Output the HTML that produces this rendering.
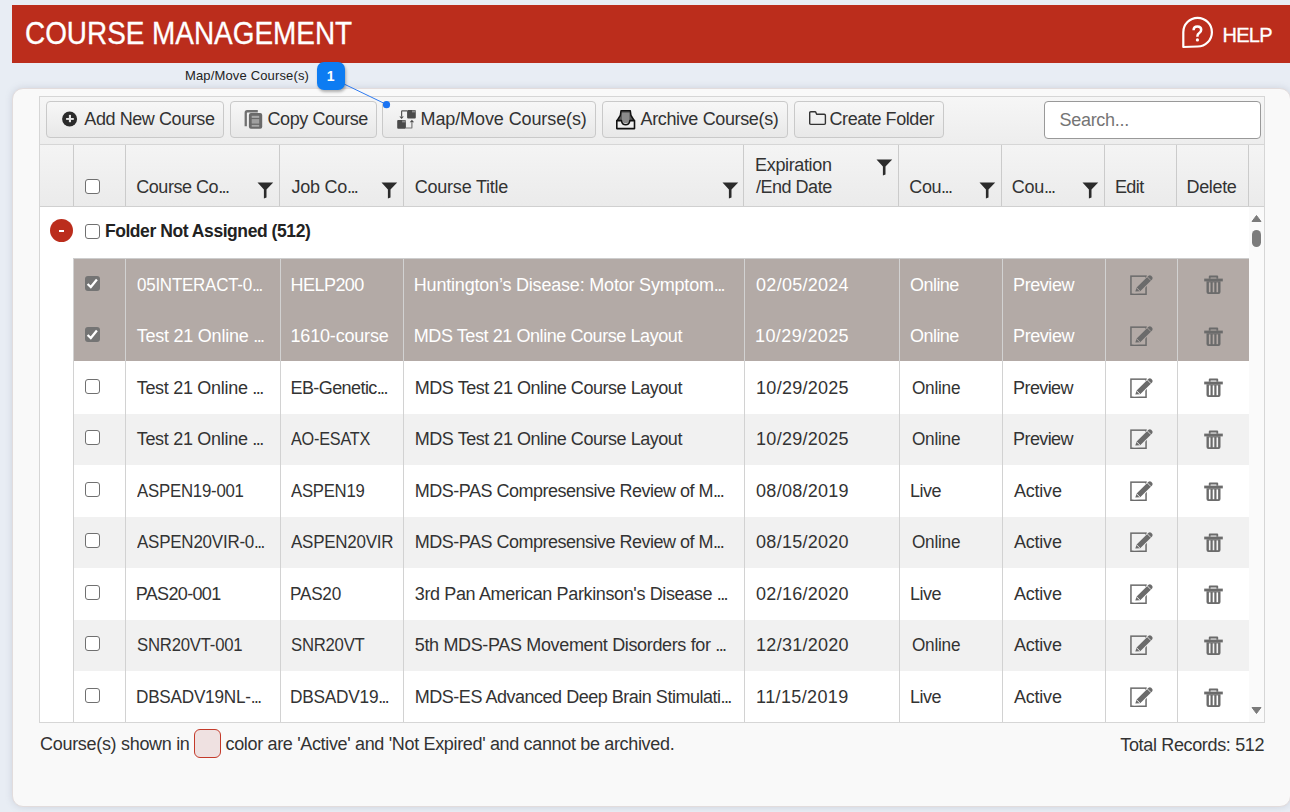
<!DOCTYPE html>
<html><head><meta charset="utf-8">
<style>
*{box-sizing:border-box;margin:0;padding:0}
html,body{width:1290px;height:812px;overflow:hidden}
body{background:#e8edf4;font-family:"Liberation Sans",sans-serif;color:#333;position:relative}
div,svg{position:absolute}
.t{white-space:nowrap;line-height:20px}
.btn{top:101px;height:37px;border:1px solid #c9c9c9;border-radius:4px;background:linear-gradient(#f7f7f7,#e8e8e8)}
.bt{top:108.5px;font-size:18px;color:#333}
.th{font-size:18px;letter-spacing:-0.25px;color:#333}
.row{left:73px;width:1176px;height:51.525px}
.c{font-size:18px;letter-spacing:-0.4px;color:#333}
.w{color:#fff}
.el{letter-spacing:-1.6px}
.sel{background:#b3aaa6}
.alt{background:#f1f1f1}
.wht{background:#fff}
.cb{width:15px;height:15px;border:1.3px solid #707070;border-radius:3px;background:#fff}
.cbc{width:15px;height:15px;border-radius:3px;background:#747474}
.vl{width:1px;background:#d2d2d2}
.ft{font-size:18px;letter-spacing:-0.3px;color:#333}
</style></head><body>
<div style="left:12px;top:5px;width:1290px;height:57.7px;background:#bb2d1c"></div>
<div class="t" style="left:24.5px;top:16px;font-size:31px;line-height:36px;letter-spacing:0px;color:#fff;-webkit-text-stroke:0.3px #fff;transform:scaleX(0.9);transform-origin:0 0">COURSE MANAGEMENT</div>
<svg style="left:1180px;top:15px" width="35" height="35" viewBox="0 0 35 35"><path d="M3.3,32 V17.2 A14.3,14.3 0 1 1 17.6,31.5 Z" fill="none" stroke="#fff" stroke-width="2.2" stroke-linejoin="round"/><path d="M13.6,15.2 Q13.6,11.5 17.4,11.5 Q21.2,11.5 21.2,14.8 Q21.2,16.8 19.3,18 Q17.4,19.2 17.4,21.2 V21.8" fill="none" stroke="#fff" stroke-width="2.5"/><circle cx="17.4" cy="24.9" r="1.6" fill="#fff"/></svg>
<div class="t" style="left:1222.5px;top:24.5px;font-size:20px;letter-spacing:-0.75px;color:#fff;-webkit-text-stroke:0.3px #fff">HELP</div>
<div style="left:12px;top:88px;width:1279px;height:719px;background:#f9f9f9;border:1px solid #e2dcdc;border-radius:11px;box-shadow:0 0 7px rgba(110,120,140,.22)"></div>
<div style="left:39px;top:96px;width:1226px;height:49px;border:1px solid #d6d6d6;border-bottom:none;background:linear-gradient(#f6f6f6,#ededed)"></div>
<div class="btn" style="left:46px;width:178px"></div>
<div class="btn" style="left:230px;width:147px"></div>
<div class="btn" style="left:382px;width:214px"></div>
<div class="btn" style="left:602px;width:186px"></div>
<div class="btn" style="left:794px;width:150px"></div>
<div class="t bt" style="left:84.3px;letter-spacing:-0.42px">Add New Course</div>
<div class="t bt" style="left:267.5px;letter-spacing:-0.42px">Copy Course</div>
<div class="t bt" style="left:420.5px;letter-spacing:-0.1px">Map/Move Course(s)</div>
<div class="t bt" style="left:640.5px;letter-spacing:-0.36px">Archive Course(s)</div>
<div class="t bt" style="left:829.5px;letter-spacing:-0.42px">Create Folder</div>
<svg style="left:60px;top:109px" width="20" height="20" viewBox="0 0 20 20"><circle cx="9.6" cy="10" r="7.5" fill="#2b2b2b"/><rect x="6.1" y="9" width="7.7" height="1.9" fill="#e6e6e6"/><rect x="8.9" y="5.9" width="2.1" height="7.3" fill="#e6e6e6"/></svg>
<svg style="left:243px;top:109px" width="21" height="21" viewBox="0 0 21 21"><path d="M1.6,17.2 V3.6 Q1.6,1.1 4.1,1.1 H14.8 V3.4 H4.4 Q3.9,3.4 3.9,3.9 V17.2 Z" fill="#707070"/><rect x="5.9" y="4" width="13.3" height="15.8" rx="2" fill="#6a6a6a"/><rect x="8.7" y="6.8" width="7.5" height="2.1" fill="#a8a8a8"/><rect x="8.7" y="10.1" width="7.5" height="4.5" fill="#a0a0a0"/><rect x="8.7" y="15.9" width="7.5" height="1.8" fill="#a8a8a8"/></svg>
<svg style="left:396px;top:109px" width="21" height="21" viewBox="0 0 21 21"><rect x="11.1" y="1.1" width="8.7" height="8.5" rx="1" fill="#4a4a4a"/><rect x="16" y="1.5" width="3.5" height="1.9" fill="#8c8c8c"/><path d="M11.1,1.9 H6.2 Q5.6,1.9 5.6,2.5 V7.6" fill="none" stroke="#555" stroke-width="1.2"/><path d="M3.4,7.5 H7.8 L5.6,10 Z" fill="#4a4a4a"/><rect x="1.2" y="11.1" width="8.7" height="8.7" rx="1" fill="#4a4a4a"/><rect x="6.1" y="11.5" width="3.5" height="1.9" fill="#8c8c8c"/><path d="M9.9,19 H15.3 Q15.9,19 15.9,18.4 V13.2" fill="none" stroke="#777" stroke-width="1.2"/><path d="M13.7,13.3 H18.1 L15.9,10.8 Z" fill="#4a4a4a"/></svg>
<svg style="left:614px;top:109px" width="23" height="21" viewBox="0 0 23 21"><path d="M2.9,11.9 L6.3,6.5 L7,1.8 H16.3 L17,6.5 L20.4,11.9" fill="#5a5a5a" stroke="#111" stroke-width="1.5" stroke-linejoin="round"/><path d="M7.9,3.8 H15.4 V10.5 Q15.4,14.3 11.65,14.3 Q7.9,14.3 7.9,10.5 Z" fill="#8a8a8a"/><path d="M2.8,11.6 H7.4 Q8.2,15.8 11.65,15.8 Q15.1,15.8 15.9,11.6 H20.5 V19.6 H2.8 Z" fill="#eeeeee" stroke="#111" stroke-width="1.6" stroke-linejoin="round"/></svg>
<svg style="left:808px;top:110px" width="19" height="16" viewBox="0 0 19 16"><path d="M1.7,13.3 V2.8 Q1.7,1.7 2.8,1.7 H7 Q7.6,1.7 7.9,2.4 L8.6,4.3 H16.3 Q17.4,4.3 17.4,5.4 V13.3 Q17.4,14.4 16.3,14.4 H2.8 Q1.7,14.4 1.7,13.3 Z" fill="none" stroke="#333" stroke-width="1.4" stroke-linejoin="round"/></svg>
<div style="left:1044px;top:101px;width:217px;height:38px;border:1.5px solid #999;border-radius:4px;background:#fff"></div>
<div class="t" style="left:1059.5px;top:110px;font-size:18px;letter-spacing:-0.3px;color:#757575">Search...</div>
<div style="left:39px;top:144px;width:1226px;height:579px;border:1px solid #d6d6d6;background:#fff"></div>
<div style="left:40px;top:145px;width:1224px;height:62px;background:linear-gradient(#f4f4f4,#ebebeb);border-bottom:1px solid #d0d0d0"></div>
<div class="vl" style="left:73px;top:145px;height:61px;background:#cbcbcb"></div>
<div class="vl" style="left:125px;top:145px;height:61px;background:#cbcbcb"></div>
<div class="vl" style="left:279px;top:145px;height:61px;background:#cbcbcb"></div>
<div class="vl" style="left:403px;top:145px;height:61px;background:#cbcbcb"></div>
<div class="vl" style="left:743px;top:145px;height:61px;background:#cbcbcb"></div>
<div class="vl" style="left:898px;top:145px;height:61px;background:#cbcbcb"></div>
<div class="vl" style="left:1001px;top:145px;height:61px;background:#cbcbcb"></div>
<div class="vl" style="left:1104px;top:145px;height:61px;background:#cbcbcb"></div>
<div class="vl" style="left:1176px;top:145px;height:61px;background:#cbcbcb"></div>
<div class="vl" style="left:1248px;top:145px;height:61px;background:#cbcbcb"></div>
<div class="cb" style="left:85px;top:179px"></div>
<div class="t th" style="left:136.30px;top:177px;letter-spacing:-0.468px">Course Co<span class="el">...</span></div>
<svg style="left:257.3px;top:181.6px" width="17" height="17" viewBox="0 0 17 17"><path d="M0.5,0.5 H16.2 L9.5,7.4 V15.6 L6.9,16.6 V7.4 Z" fill="#2b2b2b"/></svg>
<div class="t th" style="left:291.50px;top:177px;letter-spacing:-0.250px">Job Co<span class="el">...</span></div>
<svg style="left:381.1px;top:181.6px" width="17" height="17" viewBox="0 0 17 17"><path d="M0.5,0.5 H16.2 L9.5,7.4 V15.6 L6.9,16.6 V7.4 Z" fill="#2b2b2b"/></svg>
<div class="t th" style="left:414.70px;top:177px;letter-spacing:-0.214px">Course Title</div>
<svg style="left:722.1px;top:181.6px" width="17" height="17" viewBox="0 0 17 17"><path d="M0.5,0.5 H16.2 L9.5,7.4 V15.6 L6.9,16.6 V7.4 Z" fill="#2b2b2b"/></svg>
<div class="t th" style="left:909.30px;top:177px;letter-spacing:-0.410px">Cou<span class="el">...</span></div>
<svg style="left:978.9px;top:181.6px" width="17" height="17" viewBox="0 0 17 17"><path d="M0.5,0.5 H16.2 L9.5,7.4 V15.6 L6.9,16.6 V7.4 Z" fill="#2b2b2b"/></svg>
<div class="t th" style="left:1011.70px;top:177px;letter-spacing:-0.210px">Cou<span class="el">...</span></div>
<svg style="left:1082px;top:181.6px" width="17" height="17" viewBox="0 0 17 17"><path d="M0.5,0.5 H16.2 L9.5,7.4 V15.6 L6.9,16.6 V7.4 Z" fill="#2b2b2b"/></svg>
<div class="t th" style="left:1114.90px;top:177px;letter-spacing:-0.583px">Edit</div>
<div class="t th" style="left:1186.50px;top:177px;letter-spacing:-0.330px">Delete</div>
<div class="t th" style="left:755.10px;top:155px;letter-spacing:-0.361px">Expiration</div>
<div class="t th" style="left:756.10px;top:177px;letter-spacing:-0.500px">/End Date</div>
<svg style="left:876px;top:158.8px" width="17" height="17" viewBox="0 0 17 17"><path d="M0.5,0.5 H16.2 L9.5,7.4 V15.6 L6.9,16.6 V7.4 Z" fill="#2b2b2b"/></svg>
<div style="left:49.75px;top:218.8px;width:23px;height:23px;border-radius:50%;background:#bb2d1c"></div>
<div style="left:58.5px;top:229.5px;width:5.5px;height:2.6px;background:#fff"></div>
<div class="cb" style="left:85px;top:224px"></div>
<div class="t" style="left:104.90px;top:220.5px;font-size:17.5px;font-weight:bold;letter-spacing:-0.430px;color:#222">Folder Not Assigned (512)</div>
<div style="left:1249px;top:207px;width:15px;height:515px;background:#fafafa"></div>
<svg style="left:1251.2px;top:214px" width="11" height="9" viewBox="0 0 11 9"><path d="M5.5,1.5 L10,7.5 H1 Z" fill="#7a7a7a" stroke="#7a7a7a" stroke-width="1" stroke-linejoin="round"/></svg>
<div style="left:1252px;top:230px;width:9px;height:16.6px;border-radius:4.5px;background:#7c7c7c"></div>
<svg style="left:1251px;top:706px" width="11" height="9" viewBox="0 0 11 9"><path d="M5.5,7.5 L10,1.5 H1 Z" fill="#7a7a7a" stroke="#7a7a7a" stroke-width="1" stroke-linejoin="round"/></svg>
<div class="row sel" style="top:259px;height:102.45px"></div>
<div style="left:73px;top:258px;width:1176px;height:1px;background:#cdcdcd"></div>
<div class="row wht" style="top:361.65px"></div>
<div class="row alt" style="top:413.78px;height:50.925px"></div>
<div class="row wht" style="top:464.70px"></div>
<div class="row alt" style="top:516.83px;height:50.925px"></div>
<div class="row wht" style="top:567.75px"></div>
<div class="row alt" style="top:619.88px;height:50.925px"></div>
<div class="row wht" style="top:670.80px"></div>
<div class="cbc" style="left:85px;top:275.80px"><svg style="left:0;top:0" width="15" height="15" viewBox="0 0 15 15"><path d="M2.6,8 L5.8,11 L11.9,3.6" fill="none" stroke="#fff" stroke-width="2.3"/></svg></div>
<div class="t c w" style="left:136.70px;top:274.70px;letter-spacing:-0.250px;transform:scaleX(0.9421);transform-origin:0 0">05INTERACT-0<span class="el">...</span></div>
<div class="t c w" style="left:290.50px;top:274.70px;letter-spacing:-0.533px">HELP200</div>
<div class="t c w" style="left:413.80px;top:274.70px;letter-spacing:-0.195px">Huntington’s Disease: Motor Symptom<span class="el">...</span></div>
<div class="t c w" style="left:756.10px;top:274.70px;letter-spacing:0.267px">02/05/2024</div>
<div class="t c w" style="left:910.10px;top:274.70px;letter-spacing:-0.560px">Online</div>
<div class="t c w" style="left:1013.10px;top:274.70px;letter-spacing:-0.433px">Preview</div>
<svg style="left:1129px;top:273.80px" width="26" height="22" viewBox="0 0 26 22"><rect x="1.95" y="2.15" width="15.1" height="18.1" fill="none" stroke="#6b6b6b" stroke-width="1.5"/><path d="M4.4,19.6 L6.2,14 L19.2,1 Q20.9,-0.4 22.6,1.2 L23.9,2.5 Q25.4,4.2 23.8,5.9 L10.8,18.9 Z" fill="#b3aaa6"/><path d="M6.3,17.5 L7.6,13.6 L19.5,1.7 Q20.9,0.6 22.2,1.8 L23.1,2.8 Q24.3,4.1 23.1,5.4 L11.2,17.3 Z" fill="#6b6b6b"/><path d="M7.4,13.6 L11.2,17.4" stroke="#b3aaa6" stroke-width="0.9"/><path d="M18.3,2.9 L22,6.6" stroke="#b3aaa6" stroke-width="0.8"/></svg>
<svg style="left:1203px;top:275.40px" width="21" height="21" viewBox="0 0 21 21"><rect x="1.2" y="3.6" width="18.6" height="2.8" fill="#6b6b6b"/><path d="M5.8,3.8 V1.6 Q5.8,0.6 6.8,0.6 H14.2 Q15.2,0.6 15.2,1.6 V3.8 H13.4 V2.4 H7.6 V3.8 Z" fill="#6b6b6b"/><path d="M3.5,6.2 H17.5 V17 Q17.5,19 15.5,19 H5.5 Q3.5,19 3.5,17 Z" fill="#6b6b6b"/><rect x="5.9" y="7.4" width="1.6" height="9.8" fill="#b3aaa6"/><rect x="9.7" y="7.4" width="1.6" height="9.8" fill="#b3aaa6"/><rect x="13.5" y="7.4" width="1.6" height="9.8" fill="#b3aaa6"/></svg>
<div class="cbc" style="left:85px;top:327.32px"><svg style="left:0;top:0" width="15" height="15" viewBox="0 0 15 15"><path d="M2.6,8 L5.8,11 L11.9,3.6" fill="none" stroke="#fff" stroke-width="2.3"/></svg></div>
<div class="t c w" style="left:136.70px;top:326.23px;letter-spacing:-0.235px">Test 21 Online <span class="el">...</span></div>
<div class="t c w" style="left:290.50px;top:326.23px;letter-spacing:-0.180px">1610-course</div>
<div class="t c w" style="left:413.80px;top:326.23px;letter-spacing:-0.426px">MDS Test 21 Online Course Layout</div>
<div class="t c w" style="left:755.10px;top:326.23px;letter-spacing:0.378px">10/29/2025</div>
<div class="t c w" style="left:910.10px;top:326.23px;letter-spacing:-0.560px">Online</div>
<div class="t c w" style="left:1013.10px;top:326.23px;letter-spacing:-0.433px">Preview</div>
<svg style="left:1129px;top:325.32px" width="26" height="22" viewBox="0 0 26 22"><rect x="1.95" y="2.15" width="15.1" height="18.1" fill="none" stroke="#6b6b6b" stroke-width="1.5"/><path d="M4.4,19.6 L6.2,14 L19.2,1 Q20.9,-0.4 22.6,1.2 L23.9,2.5 Q25.4,4.2 23.8,5.9 L10.8,18.9 Z" fill="#b3aaa6"/><path d="M6.3,17.5 L7.6,13.6 L19.5,1.7 Q20.9,0.6 22.2,1.8 L23.1,2.8 Q24.3,4.1 23.1,5.4 L11.2,17.3 Z" fill="#6b6b6b"/><path d="M7.4,13.6 L11.2,17.4" stroke="#b3aaa6" stroke-width="0.9"/><path d="M18.3,2.9 L22,6.6" stroke="#b3aaa6" stroke-width="0.8"/></svg>
<svg style="left:1203px;top:326.93px" width="21" height="21" viewBox="0 0 21 21"><rect x="1.2" y="3.6" width="18.6" height="2.8" fill="#6b6b6b"/><path d="M5.8,3.8 V1.6 Q5.8,0.6 6.8,0.6 H14.2 Q15.2,0.6 15.2,1.6 V3.8 H13.4 V2.4 H7.6 V3.8 Z" fill="#6b6b6b"/><path d="M3.5,6.2 H17.5 V17 Q17.5,19 15.5,19 H5.5 Q3.5,19 3.5,17 Z" fill="#6b6b6b"/><rect x="5.9" y="7.4" width="1.6" height="9.8" fill="#b3aaa6"/><rect x="9.7" y="7.4" width="1.6" height="9.8" fill="#b3aaa6"/><rect x="13.5" y="7.4" width="1.6" height="9.8" fill="#b3aaa6"/></svg>
<div class="cb" style="left:85px;top:378.55px"></div>
<div class="t c" style="left:136.70px;top:377.75px;letter-spacing:-0.294px">Test 21 Online <span class="el">...</span></div>
<div class="t c" style="left:290.50px;top:377.75px;letter-spacing:-0.583px">EB-Genetic<span class="el">...</span></div>
<div class="t c" style="left:414.80px;top:377.75px;letter-spacing:-0.458px">MDS Test 21 Online Course Layout</div>
<div class="t c" style="left:756.10px;top:377.75px;letter-spacing:0.267px">10/29/2025</div>
<div class="t c" style="left:911.50px;top:377.75px;letter-spacing:-0.250px;transform:scaleX(0.9539);transform-origin:0 0">Online</div>
<div class="t c" style="left:1013.10px;top:377.75px;letter-spacing:-0.600px">Preview</div>
<svg style="left:1129px;top:376.85px" width="26" height="22" viewBox="0 0 26 22"><rect x="1.95" y="2.15" width="15.1" height="18.1" fill="none" stroke="#6b6b6b" stroke-width="1.5"/><path d="M4.4,19.6 L6.2,14 L19.2,1 Q20.9,-0.4 22.6,1.2 L23.9,2.5 Q25.4,4.2 23.8,5.9 L10.8,18.9 Z" fill="#ffffff"/><path d="M6.3,17.5 L7.6,13.6 L19.5,1.7 Q20.9,0.6 22.2,1.8 L23.1,2.8 Q24.3,4.1 23.1,5.4 L11.2,17.3 Z" fill="#6b6b6b"/><path d="M7.4,13.6 L11.2,17.4" stroke="#ffffff" stroke-width="0.9"/><path d="M18.3,2.9 L22,6.6" stroke="#ffffff" stroke-width="0.8"/></svg>
<svg style="left:1203px;top:378.45px" width="21" height="21" viewBox="0 0 21 21"><rect x="1.2" y="3.6" width="18.6" height="2.8" fill="#6b6b6b"/><path d="M5.8,3.8 V1.6 Q5.8,0.6 6.8,0.6 H14.2 Q15.2,0.6 15.2,1.6 V3.8 H13.4 V2.4 H7.6 V3.8 Z" fill="#6b6b6b"/><path d="M3.5,6.2 H17.5 V17 Q17.5,19 15.5,19 H5.5 Q3.5,19 3.5,17 Z" fill="#6b6b6b"/><rect x="5.9" y="7.4" width="1.6" height="9.8" fill="#ffffff"/><rect x="9.7" y="7.4" width="1.6" height="9.8" fill="#ffffff"/><rect x="13.5" y="7.4" width="1.6" height="9.8" fill="#ffffff"/></svg>
<div class="cb" style="left:85px;top:430.07px"></div>
<div class="t c" style="left:136.70px;top:429.28px;letter-spacing:-0.294px">Test 21 Online <span class="el">...</span></div>
<div class="t c" style="left:291.30px;top:429.28px;letter-spacing:-0.250px;transform:scaleX(0.9028);transform-origin:0 0">AO-ESATX</div>
<div class="t c" style="left:414.80px;top:429.28px;letter-spacing:-0.458px">MDS Test 21 Online Course Layout</div>
<div class="t c" style="left:756.10px;top:429.28px;letter-spacing:0.267px">10/29/2025</div>
<div class="t c" style="left:911.50px;top:429.28px;letter-spacing:-0.250px;transform:scaleX(0.9539);transform-origin:0 0">Online</div>
<div class="t c" style="left:1013.10px;top:429.28px;letter-spacing:-0.600px">Preview</div>
<svg style="left:1129px;top:428.38px" width="26" height="22" viewBox="0 0 26 22"><rect x="1.95" y="2.15" width="15.1" height="18.1" fill="none" stroke="#6b6b6b" stroke-width="1.5"/><path d="M4.4,19.6 L6.2,14 L19.2,1 Q20.9,-0.4 22.6,1.2 L23.9,2.5 Q25.4,4.2 23.8,5.9 L10.8,18.9 Z" fill="#f1f1f1"/><path d="M6.3,17.5 L7.6,13.6 L19.5,1.7 Q20.9,0.6 22.2,1.8 L23.1,2.8 Q24.3,4.1 23.1,5.4 L11.2,17.3 Z" fill="#6b6b6b"/><path d="M7.4,13.6 L11.2,17.4" stroke="#f1f1f1" stroke-width="0.9"/><path d="M18.3,2.9 L22,6.6" stroke="#f1f1f1" stroke-width="0.8"/></svg>
<svg style="left:1203px;top:429.98px" width="21" height="21" viewBox="0 0 21 21"><rect x="1.2" y="3.6" width="18.6" height="2.8" fill="#6b6b6b"/><path d="M5.8,3.8 V1.6 Q5.8,0.6 6.8,0.6 H14.2 Q15.2,0.6 15.2,1.6 V3.8 H13.4 V2.4 H7.6 V3.8 Z" fill="#6b6b6b"/><path d="M3.5,6.2 H17.5 V17 Q17.5,19 15.5,19 H5.5 Q3.5,19 3.5,17 Z" fill="#6b6b6b"/><rect x="5.9" y="7.4" width="1.6" height="9.8" fill="#f1f1f1"/><rect x="9.7" y="7.4" width="1.6" height="9.8" fill="#f1f1f1"/><rect x="13.5" y="7.4" width="1.6" height="9.8" fill="#f1f1f1"/></svg>
<div class="cb" style="left:85px;top:481.60px"></div>
<div class="t c" style="left:136.70px;top:480.80px;letter-spacing:-0.250px;transform:scaleX(0.9335);transform-origin:0 0">ASPEN19-001</div>
<div class="t c" style="left:291.30px;top:480.80px;letter-spacing:-0.250px;transform:scaleX(0.9275);transform-origin:0 0">ASPEN19</div>
<div class="t c" style="left:414.80px;top:480.80px;letter-spacing:-0.503px">MDS-PAS Compresensive Review of M<span class="el">...</span></div>
<div class="t c" style="left:756.10px;top:480.80px;letter-spacing:0.267px">08/08/2019</div>
<div class="t c" style="left:909.90px;top:480.80px;letter-spacing:-0.467px">Live</div>
<div class="t c" style="left:1013.90px;top:480.80px;letter-spacing:-0.200px">Active</div>
<svg style="left:1129px;top:479.90px" width="26" height="22" viewBox="0 0 26 22"><rect x="1.95" y="2.15" width="15.1" height="18.1" fill="none" stroke="#6b6b6b" stroke-width="1.5"/><path d="M4.4,19.6 L6.2,14 L19.2,1 Q20.9,-0.4 22.6,1.2 L23.9,2.5 Q25.4,4.2 23.8,5.9 L10.8,18.9 Z" fill="#ffffff"/><path d="M6.3,17.5 L7.6,13.6 L19.5,1.7 Q20.9,0.6 22.2,1.8 L23.1,2.8 Q24.3,4.1 23.1,5.4 L11.2,17.3 Z" fill="#6b6b6b"/><path d="M7.4,13.6 L11.2,17.4" stroke="#ffffff" stroke-width="0.9"/><path d="M18.3,2.9 L22,6.6" stroke="#ffffff" stroke-width="0.8"/></svg>
<svg style="left:1203px;top:481.50px" width="21" height="21" viewBox="0 0 21 21"><rect x="1.2" y="3.6" width="18.6" height="2.8" fill="#6b6b6b"/><path d="M5.8,3.8 V1.6 Q5.8,0.6 6.8,0.6 H14.2 Q15.2,0.6 15.2,1.6 V3.8 H13.4 V2.4 H7.6 V3.8 Z" fill="#6b6b6b"/><path d="M3.5,6.2 H17.5 V17 Q17.5,19 15.5,19 H5.5 Q3.5,19 3.5,17 Z" fill="#6b6b6b"/><rect x="5.9" y="7.4" width="1.6" height="9.8" fill="#ffffff"/><rect x="9.7" y="7.4" width="1.6" height="9.8" fill="#ffffff"/><rect x="13.5" y="7.4" width="1.6" height="9.8" fill="#ffffff"/></svg>
<div class="cb" style="left:85px;top:533.12px"></div>
<div class="t c" style="left:136.70px;top:532.33px;letter-spacing:-0.250px;transform:scaleX(0.9434);transform-origin:0 0">ASPEN20VIR-0<span class="el">...</span></div>
<div class="t c" style="left:291.30px;top:532.33px;letter-spacing:-0.250px;transform:scaleX(0.9430);transform-origin:0 0">ASPEN20VIR</div>
<div class="t c" style="left:414.80px;top:532.33px;letter-spacing:-0.503px">MDS-PAS Compresensive Review of M<span class="el">...</span></div>
<div class="t c" style="left:756.10px;top:532.33px;letter-spacing:0.267px">08/15/2020</div>
<div class="t c" style="left:911.50px;top:532.33px;letter-spacing:-0.250px;transform:scaleX(0.9539);transform-origin:0 0">Online</div>
<div class="t c" style="left:1013.90px;top:532.33px;letter-spacing:-0.200px">Active</div>
<svg style="left:1129px;top:531.43px" width="26" height="22" viewBox="0 0 26 22"><rect x="1.95" y="2.15" width="15.1" height="18.1" fill="none" stroke="#6b6b6b" stroke-width="1.5"/><path d="M4.4,19.6 L6.2,14 L19.2,1 Q20.9,-0.4 22.6,1.2 L23.9,2.5 Q25.4,4.2 23.8,5.9 L10.8,18.9 Z" fill="#f1f1f1"/><path d="M6.3,17.5 L7.6,13.6 L19.5,1.7 Q20.9,0.6 22.2,1.8 L23.1,2.8 Q24.3,4.1 23.1,5.4 L11.2,17.3 Z" fill="#6b6b6b"/><path d="M7.4,13.6 L11.2,17.4" stroke="#f1f1f1" stroke-width="0.9"/><path d="M18.3,2.9 L22,6.6" stroke="#f1f1f1" stroke-width="0.8"/></svg>
<svg style="left:1203px;top:533.02px" width="21" height="21" viewBox="0 0 21 21"><rect x="1.2" y="3.6" width="18.6" height="2.8" fill="#6b6b6b"/><path d="M5.8,3.8 V1.6 Q5.8,0.6 6.8,0.6 H14.2 Q15.2,0.6 15.2,1.6 V3.8 H13.4 V2.4 H7.6 V3.8 Z" fill="#6b6b6b"/><path d="M3.5,6.2 H17.5 V17 Q17.5,19 15.5,19 H5.5 Q3.5,19 3.5,17 Z" fill="#6b6b6b"/><rect x="5.9" y="7.4" width="1.6" height="9.8" fill="#f1f1f1"/><rect x="9.7" y="7.4" width="1.6" height="9.8" fill="#f1f1f1"/><rect x="13.5" y="7.4" width="1.6" height="9.8" fill="#f1f1f1"/></svg>
<div class="cb" style="left:85px;top:584.65px"></div>
<div class="t c" style="left:135.70px;top:583.85px;letter-spacing:-0.650px">PAS20-001</div>
<div class="t c" style="left:290.30px;top:583.85px;letter-spacing:-0.250px;transform:scaleX(0.9529);transform-origin:0 0">PAS20</div>
<div class="t c" style="left:414.80px;top:583.85px;letter-spacing:-0.369px">3rd Pan American Parkinson's Disease <span class="el">...</span></div>
<div class="t c" style="left:756.10px;top:583.85px;letter-spacing:0.267px">02/16/2020</div>
<div class="t c" style="left:909.90px;top:583.85px;letter-spacing:-0.467px">Live</div>
<div class="t c" style="left:1013.90px;top:583.85px;letter-spacing:-0.200px">Active</div>
<svg style="left:1129px;top:582.95px" width="26" height="22" viewBox="0 0 26 22"><rect x="1.95" y="2.15" width="15.1" height="18.1" fill="none" stroke="#6b6b6b" stroke-width="1.5"/><path d="M4.4,19.6 L6.2,14 L19.2,1 Q20.9,-0.4 22.6,1.2 L23.9,2.5 Q25.4,4.2 23.8,5.9 L10.8,18.9 Z" fill="#ffffff"/><path d="M6.3,17.5 L7.6,13.6 L19.5,1.7 Q20.9,0.6 22.2,1.8 L23.1,2.8 Q24.3,4.1 23.1,5.4 L11.2,17.3 Z" fill="#6b6b6b"/><path d="M7.4,13.6 L11.2,17.4" stroke="#ffffff" stroke-width="0.9"/><path d="M18.3,2.9 L22,6.6" stroke="#ffffff" stroke-width="0.8"/></svg>
<svg style="left:1203px;top:584.55px" width="21" height="21" viewBox="0 0 21 21"><rect x="1.2" y="3.6" width="18.6" height="2.8" fill="#6b6b6b"/><path d="M5.8,3.8 V1.6 Q5.8,0.6 6.8,0.6 H14.2 Q15.2,0.6 15.2,1.6 V3.8 H13.4 V2.4 H7.6 V3.8 Z" fill="#6b6b6b"/><path d="M3.5,6.2 H17.5 V17 Q17.5,19 15.5,19 H5.5 Q3.5,19 3.5,17 Z" fill="#6b6b6b"/><rect x="5.9" y="7.4" width="1.6" height="9.8" fill="#ffffff"/><rect x="9.7" y="7.4" width="1.6" height="9.8" fill="#ffffff"/><rect x="13.5" y="7.4" width="1.6" height="9.8" fill="#ffffff"/></svg>
<div class="cb" style="left:85px;top:636.18px"></div>
<div class="t c" style="left:136.70px;top:635.38px;letter-spacing:-0.250px;transform:scaleX(0.9300);transform-origin:0 0">SNR20VT-001</div>
<div class="t c" style="left:291.30px;top:635.38px;letter-spacing:-0.250px;transform:scaleX(0.9275);transform-origin:0 0">SNR20VT</div>
<div class="t c" style="left:414.80px;top:635.38px;letter-spacing:-0.351px">5th MDS-PAS Movement Disorders for <span class="el">...</span></div>
<div class="t c" style="left:756.10px;top:635.38px;letter-spacing:0.267px">12/31/2020</div>
<div class="t c" style="left:911.50px;top:635.38px;letter-spacing:-0.250px;transform:scaleX(0.9539);transform-origin:0 0">Online</div>
<div class="t c" style="left:1013.90px;top:635.38px;letter-spacing:-0.200px">Active</div>
<svg style="left:1129px;top:634.48px" width="26" height="22" viewBox="0 0 26 22"><rect x="1.95" y="2.15" width="15.1" height="18.1" fill="none" stroke="#6b6b6b" stroke-width="1.5"/><path d="M4.4,19.6 L6.2,14 L19.2,1 Q20.9,-0.4 22.6,1.2 L23.9,2.5 Q25.4,4.2 23.8,5.9 L10.8,18.9 Z" fill="#f1f1f1"/><path d="M6.3,17.5 L7.6,13.6 L19.5,1.7 Q20.9,0.6 22.2,1.8 L23.1,2.8 Q24.3,4.1 23.1,5.4 L11.2,17.3 Z" fill="#6b6b6b"/><path d="M7.4,13.6 L11.2,17.4" stroke="#f1f1f1" stroke-width="0.9"/><path d="M18.3,2.9 L22,6.6" stroke="#f1f1f1" stroke-width="0.8"/></svg>
<svg style="left:1203px;top:636.08px" width="21" height="21" viewBox="0 0 21 21"><rect x="1.2" y="3.6" width="18.6" height="2.8" fill="#6b6b6b"/><path d="M5.8,3.8 V1.6 Q5.8,0.6 6.8,0.6 H14.2 Q15.2,0.6 15.2,1.6 V3.8 H13.4 V2.4 H7.6 V3.8 Z" fill="#6b6b6b"/><path d="M3.5,6.2 H17.5 V17 Q17.5,19 15.5,19 H5.5 Q3.5,19 3.5,17 Z" fill="#6b6b6b"/><rect x="5.9" y="7.4" width="1.6" height="9.8" fill="#f1f1f1"/><rect x="9.7" y="7.4" width="1.6" height="9.8" fill="#f1f1f1"/><rect x="13.5" y="7.4" width="1.6" height="9.8" fill="#f1f1f1"/></svg>
<div class="cb" style="left:85px;top:687.70px"></div>
<div class="t c" style="left:135.70px;top:686.90px;letter-spacing:-0.250px;transform:scaleX(0.9531);transform-origin:0 0">DBSADV19NL-<span class="el">...</span></div>
<div class="t c" style="left:290.30px;top:686.90px;letter-spacing:-0.250px;transform:scaleX(0.9594);transform-origin:0 0">DBSADV19<span class="el">...</span></div>
<div class="t c" style="left:414.80px;top:686.90px;letter-spacing:-0.484px">MDS-ES Advanced Deep Brain Stimulati<span class="el">...</span></div>
<div class="t c" style="left:756.10px;top:686.90px;letter-spacing:0.378px">11/15/2019</div>
<div class="t c" style="left:909.90px;top:686.90px;letter-spacing:-0.467px">Live</div>
<div class="t c" style="left:1013.90px;top:686.90px;letter-spacing:-0.200px">Active</div>
<svg style="left:1129px;top:686.00px" width="26" height="22" viewBox="0 0 26 22"><rect x="1.95" y="2.15" width="15.1" height="18.1" fill="none" stroke="#6b6b6b" stroke-width="1.5"/><path d="M4.4,19.6 L6.2,14 L19.2,1 Q20.9,-0.4 22.6,1.2 L23.9,2.5 Q25.4,4.2 23.8,5.9 L10.8,18.9 Z" fill="#ffffff"/><path d="M6.3,17.5 L7.6,13.6 L19.5,1.7 Q20.9,0.6 22.2,1.8 L23.1,2.8 Q24.3,4.1 23.1,5.4 L11.2,17.3 Z" fill="#6b6b6b"/><path d="M7.4,13.6 L11.2,17.4" stroke="#ffffff" stroke-width="0.9"/><path d="M18.3,2.9 L22,6.6" stroke="#ffffff" stroke-width="0.8"/></svg>
<svg style="left:1203px;top:687.60px" width="21" height="21" viewBox="0 0 21 21"><rect x="1.2" y="3.6" width="18.6" height="2.8" fill="#6b6b6b"/><path d="M5.8,3.8 V1.6 Q5.8,0.6 6.8,0.6 H14.2 Q15.2,0.6 15.2,1.6 V3.8 H13.4 V2.4 H7.6 V3.8 Z" fill="#6b6b6b"/><path d="M3.5,6.2 H17.5 V17 Q17.5,19 15.5,19 H5.5 Q3.5,19 3.5,17 Z" fill="#6b6b6b"/><rect x="5.9" y="7.4" width="1.6" height="9.8" fill="#ffffff"/><rect x="9.7" y="7.4" width="1.6" height="9.8" fill="#ffffff"/><rect x="13.5" y="7.4" width="1.6" height="9.8" fill="#ffffff"/></svg>
<div class="vl" style="left:73px;top:258.6px;height:463.40px"></div>
<div class="vl" style="left:125px;top:258.6px;height:463.40px"></div>
<div class="vl" style="left:280px;top:258.6px;height:463.40px"></div>
<div class="vl" style="left:403px;top:258.6px;height:463.40px"></div>
<div class="vl" style="left:744px;top:258.6px;height:463.40px"></div>
<div class="vl" style="left:899px;top:258.6px;height:463.40px"></div>
<div class="vl" style="left:1002px;top:258.6px;height:463.40px"></div>
<div class="vl" style="left:1105px;top:258.6px;height:463.40px"></div>
<div class="vl" style="left:1177px;top:258.6px;height:463.40px"></div>
<div class="t ft" style="left:40.10px;top:734px;letter-spacing:-0.312px">Course(s) shown in</div>
<div style="left:194px;top:729px;width:27px;height:28.5px;border:1.5px solid #c43a2a;border-radius:6px;background:#efe1e1"></div>
<div class="t ft" style="left:225.50px;top:734px;letter-spacing:-0.337px">color are &#39;Active&#39; and &#39;Not Expired&#39; and cannot be archived.</div>
<div class="t ft" style="left:1120.30px;top:735px;letter-spacing:-0.347px">Total Records: 512</div>
<div class="t" style="left:185px;top:65.5px;font-size:13px;letter-spacing:0.15px;color:#222">Map/Move Course(s)</div>
<svg style="left:0;top:0" width="1290" height="812"><line x1="344" y1="84" x2="387" y2="104.7" stroke="#2f7bf0" stroke-width="1"/><circle cx="386.5" cy="104.7" r="3.6" fill="#1a73f2"/></svg>
<div style="left:316.7px;top:62px;width:28px;height:27.5px;border-radius:7px;background:#0d7cf2;box-shadow:1px 2px 3px rgba(0,0,0,.3)"></div>
<div class="t" style="left:316.7px;top:65.5px;width:28px;text-align:center;font-weight:bold;font-size:14px;color:#fff">1</div>
</body></html>
